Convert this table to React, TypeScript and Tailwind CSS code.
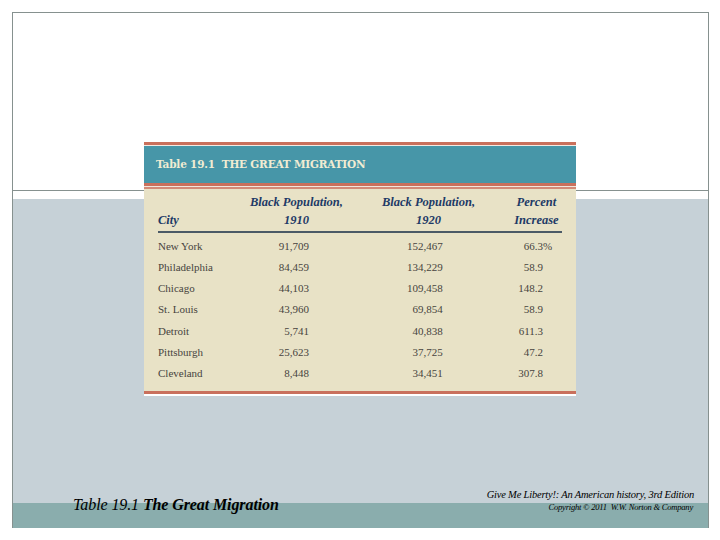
import React from "react";

const rows: [string, string, string, string, boolean][] = [
  ["New York", "91,709", "152,467", "66.3", true],
  ["Philadelphia", "84,459", "134,229", "58.9", false],
  ["Chicago", "44,103", "109,458", "148.2", false],
  ["St. Louis", "43,960", "69,854", "58.9", false],
  ["Detroit", "5,741", "40,838", "611.3", false],
  ["Pittsburgh", "25,623", "37,725", "47.2", false],
  ["Cleveland", "8,448", "34,451", "307.8", false],
];

export default function App() {
  return (
    <div className="relative w-[720px] h-[540px] bg-white overflow-hidden">
      <div className="pt-[12px] pl-[12px]">
        <div className="w-[697px] h-[516px] border-x border-t border-[#86918f] flex flex-col">
          <div className="h-[178px] border-b border-[#86918f] bg-white" />
          <div className="h-[8px] bg-white" />
          <div className="flex-1 bg-[#c6d1d7]" />
          <div className="h-[25px] bg-[#8aadad]" />
        </div>
      </div>

      {/* Footer texts */}
      <div className="absolute left-[73px] top-[494px] text-[16px] leading-[22px] italic text-black font-['Liberation_Serif','Times_New_Roman',serif] tracking-[-0.1px]">
        Table 19.1 <span className="font-bold">The Great Migration</span>
      </div>
      <div className="absolute right-[26px] top-[488px] flex flex-col items-end italic text-black font-['Liberation_Serif','Times_New_Roman',serif]">
        <div className="text-[10.5px] leading-[13px] tracking-[-0.2px]">Give Me Liberty!: An American history, 3rd Edition</div>
        <div className="text-[8.5px] leading-[12px] tracking-[-0.2px] pr-[1px]">Copyright © 2011&nbsp; W.W. Norton &amp; Company</div>
      </div>

      {/* Table image */}
      <div className="absolute left-[144px] top-[142px] w-[432px] flex flex-col">
        <div className="h-[3px] bg-[#c9705c]" />
        <div className="h-[1px] bg-[#f4e9e2]" />
        <div className="h-[37px] bg-[#4796a8] flex items-center pl-[12px]">
          <span className="text-[10.5px] font-bold text-[#f1ecd3] font-['DejaVu_Serif',serif] tracking-[-0.2px]">
            Table 19.1&nbsp;&nbsp;THE GREAT MIGRATION
          </span>
        </div>
        <div className="h-[3px] bg-[#c9705c]" />
        <div className="h-[1px] bg-[#f0e6dc]" />
        <div className="h-[2px] bg-[#d28a77]" />
        <div className="bg-[#e8e2c6] px-[14px] pt-[4px] pb-[7px] flex flex-col">
          <div className="flex items-end pb-[2px] border-b-2 border-[#4b5a66] text-[12.5px] leading-[18px] italic font-bold text-[#1e3a66] font-['Liberation_Serif','Times_New_Roman',serif]">
            <div className="w-[92px]">City</div>
            <div className="w-[97px] text-center">Black Population,<br />1910</div>
            <div className="ml-[37px] w-[96px] text-center">Black Population,<br />1920</div>
            <div className="ml-[35px] w-[52px] text-center">Percent<br />Increase</div>
          </div>
          <div className="pt-[2.5px] flex flex-col text-[11px] text-[#47443e] font-['Liberation_Serif','Times_New_Roman',serif]">
            {rows.map(([city, a, b, c, pct]) => (
              <div key={city} className="flex items-center h-[21.2px]">
                <div className="w-[92px]">{city}</div>
                <div className="w-[97px] text-right pr-[35px]">{a}</div>
                <div className="ml-[37px] w-[96px] text-right pr-[33px]">{b}</div>
                <div className="ml-[35px] w-[52px] text-right pr-[19px]">
                  {c}
                  {pct ? <span className="inline-block w-0 text-left">%</span> : null}
                </div>
              </div>
            ))}
          </div>
        </div>
        <div className="h-[3px] bg-[#c9705c]" />
        <div className="h-[2px] bg-white" />
      </div>
    </div>
  );
}
